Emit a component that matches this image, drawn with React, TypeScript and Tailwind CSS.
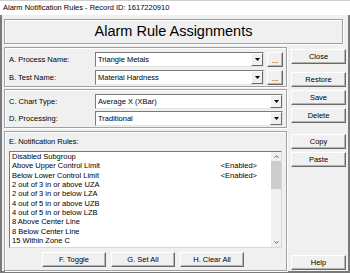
import React from "react";

function Btn({ children, className = "" }: { children?: React.ReactNode; className?: string }) {
  return (
    <div
      className={`flex items-center justify-center bg-[#f0f0f0] border border-t-white border-l-white border-r-[#696969] border-b-[#696969] shadow-[inset_-1px_-1px_0_#b4b4b4] text-[7.5px] leading-none text-black ${className}`}
    >
      {children}
    </div>
  );
}

function Arrow() {
  return (
    <svg width="5" height="3" viewBox="0 0 5 3">
      <polygon points="0,0 5,0 2.5,3" fill="#000" />
    </svg>
  );
}

function Combo({ text }: { text: string }) {
  return (
    <div className="flex-1 h-[15px] flex border border-t-[#7a7a7a] border-l-[#7a7a7a] border-r-[#e3e3e3] border-b-[#e3e3e3] bg-white">
      <div className="flex-1 flex items-center pl-[2px] text-[7.5px] leading-none text-black">{text}</div>
      <div className="w-[12px] flex items-center justify-center bg-[#f0f0f0] border border-t-white border-l-white border-r-[#696969] border-b-[#696969]">
        <Arrow />
      </div>
    </div>
  );
}

const items: [string, string][] = [
  ["Disabled Subgroup", ""],
  ["Above Upper Control Limit", "<Enabled>"],
  ["Below Lower Control Limit", "<Enabled>"],
  ["2 out of 3 in or above UZA", ""],
  ["2 out of 3 in or below LZA", ""],
  ["4 out of 5 in or above UZB", ""],
  ["4 out of 5 in or below LZB", ""],
  ["8 Above Center Line", ""],
  ["8 Below Center Line", ""],
  ["15 Within Zone C", ""],
  ["8 Avoiding Zone C", ""],
];

const group = "border border-[#a0a0a0] shadow-[1px_1px_0_#ffffff,inset_1px_1px_0_#ffffff]";

export default function App() {
  return (
    <div className="w-[350px] h-[273px] overflow-hidden bg-[#f0f0f0] flex flex-col font-['Liberation_Sans',Arial,sans-serif] text-black">
      <div className="h-[15px] shrink-0 bg-white border-t border-[#cfcfcf] flex items-center pl-[3px] text-[7.5px] leading-none">
        Alarm Notification Rules - Record ID: 1617220910
      </div>
      <div className="flex-1 flex flex-col border-l-2 border-r-2 border-b-2 border-[#7a7a7a] pt-[4px] pl-[2px] pr-[2px]">
        <div className={`h-[25px] shrink-0 mr-[3px] flex items-center justify-center text-[14.5px] leading-none ${group}`}>
          Alarm Rule Assignments
        </div>
        <div className="flex gap-[4px] mt-[3px] flex-1">
          <div className="w-[283px] flex flex-col">
            <div className={`h-[40px] flex flex-col pt-[4px] pl-[4px] pr-[3px] gap-[3px] ${group}`}>
              <div className="flex items-center">
                <div className="w-[86px] text-[7.5px] leading-none">A. Process Name:</div>
                <Combo text="Triangle Metals" />
                <Btn className="w-[16px] h-[15px] ml-[3px] items-end pb-[2px]">...</Btn>
              </div>
              <div className="flex items-center">
                <div className="w-[86px] text-[7.5px] leading-none">B. Test Name:</div>
                <Combo text="Material Hardness" />
                <Btn className="w-[16px] h-[15px] ml-[3px] items-end pb-[2px]">...</Btn>
              </div>
            </div>
            <div className={`h-[39px] mt-[2px] flex flex-col pt-[4px] pl-[4px] pr-[3px] gap-[2px] ${group}`}>
              <div className="flex items-center">
                <div className="w-[86px] text-[7.5px] leading-none">C. Chart Type:</div>
                <Combo text="Average X (XBar)" />
              </div>
              <div className="flex items-center">
                <div className="w-[86px] text-[7.5px] leading-none">D. Processing:</div>
                <Combo text="Traditional" />
              </div>
            </div>
            <div className={`h-[140px] mt-[3px] flex flex-col pt-[5px] pl-[4px] pr-[4px] ${group}`}>
              <div className="h-[10px] flex items-center text-[7.5px] leading-none">E. Notification Rules:</div>
              <div className="mt-[4px] h-[97px] flex bg-white border border-t-[#7a7a7a] border-l-[#7a7a7a] border-r-[#d8d8d8] border-b-[#d8d8d8] overflow-hidden">
                <div className="flex-1 flex flex-col pl-[2px] pr-[14px] overflow-hidden">
                  {items.map(([t, s], i) => (
                    <div key={i} className="h-[9.33px] shrink-0 flex items-center justify-between text-[7.5px] leading-none whitespace-nowrap">
                      <span>{t}</span>
                      <span>{s}</span>
                    </div>
                  ))}
                </div>
                <div className="w-[10px] flex flex-col items-center bg-[#f0f0f0]">
                  <div className="h-[9px] flex items-center justify-center">
                    <svg width="5" height="3" viewBox="0 0 5 3">
                      <polyline points="0.5,2.7 2.5,0.7 4.5,2.7" fill="none" stroke="#606060" strokeWidth="1" />
                    </svg>
                  </div>
                  <div className="w-full h-[28px] bg-[#cdcdcd]" />
                  <div className="flex-1" />
                  <div className="h-[9px] flex items-center justify-center">
                    <svg width="5" height="3" viewBox="0 0 5 3">
                      <polyline points="0.5,0.3 2.5,2.3 4.5,0.3" fill="none" stroke="#606060" strokeWidth="1" />
                    </svg>
                  </div>
                </div>
              </div>
              <div className="mt-[4px] flex gap-[5px] pl-[33px]">
                <Btn className="w-[64px] h-[15px]">F. Toggle</Btn>
                <Btn className="w-[64px] h-[15px]">G. Set All</Btn>
                <Btn className="w-[64px] h-[15px]">H. Clear All</Btn>
              </div>
            </div>
          </div>
          <div className="w-[55px] flex flex-col pb-[1px]">
            <Btn className="h-[15px] mt-[2px]">Close</Btn>
            <Btn className="h-[15px] mt-[8px]">Restore</Btn>
            <Btn className="h-[15px] mt-[3px]">Save</Btn>
            <Btn className="h-[15px] mt-[3px]">Delete</Btn>
            <Btn className="h-[15px] mt-[11px]">Copy</Btn>
            <Btn className="h-[15px] mt-[3px]">Paste</Btn>
            <div className="flex-1" />
            <Btn className="h-[15px]">Help</Btn>
          </div>
        </div>
      </div>
    </div>
  );
}
